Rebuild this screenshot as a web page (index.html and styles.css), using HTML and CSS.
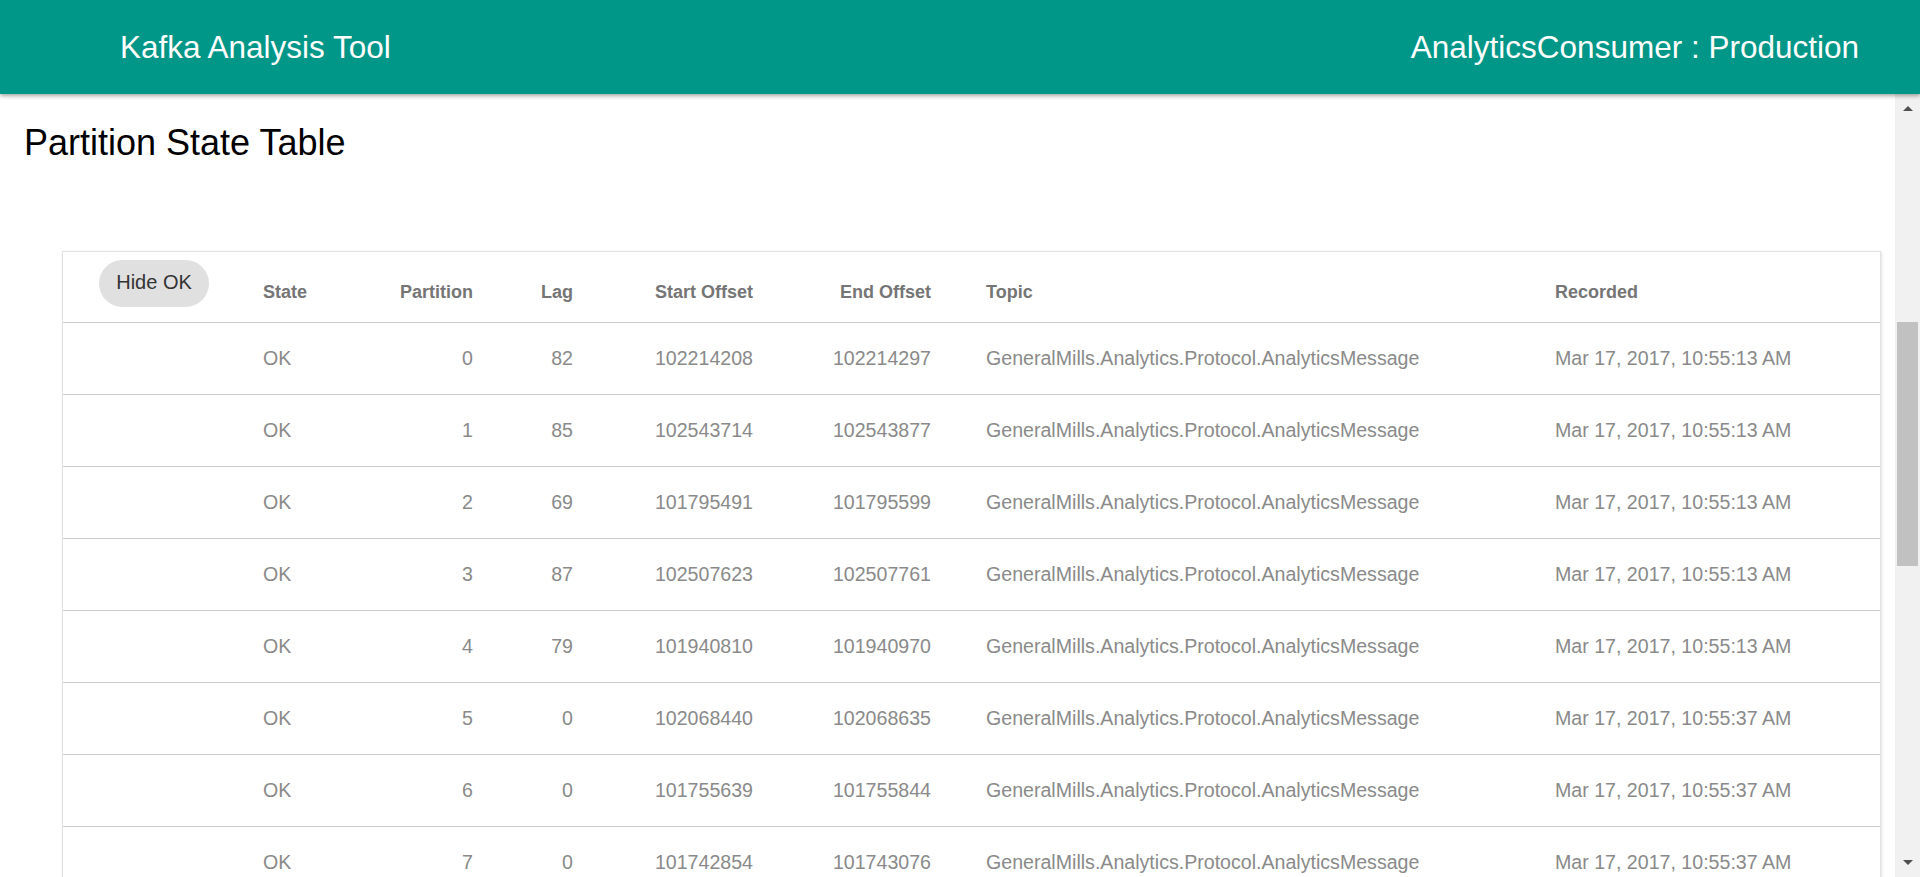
FILE: index.html
```html
<!DOCTYPE html>
<html>
<head>
<meta charset="utf-8">
<title>Kafka Analysis Tool</title>
<link rel="stylesheet" href="styles.css">
</head>
<body>
<header class="topbar">
  <div class="app-title">Kafka Analysis Tool</div>
  <div class="consumer">AnalyticsConsumer : Production</div>
</header>
<div class="main">
  <div class="content">
    <h1 class="page-title">Partition State Table</h1>
    <div class="card">
      <table class="grid">
        <colgroup>
          <col class="c-btn"><col class="c-state"><col class="c-part"><col class="c-lag"><col class="c-start"><col class="c-end"><col class="c-topic"><col class="c-rec">
        </colgroup>
        <thead>
          <tr>
            <th class="btn-cell"><button class="hide-btn">Hide OK</button></th>
            <th class="l">State</th>
            <th class="r">Partition</th>
            <th class="r">Lag</th>
            <th class="r">Start Offset</th>
            <th class="r">End Offset</th>
            <th class="l topic">Topic</th>
            <th class="l">Recorded</th>
          </tr>
        </thead>
        <tbody>
          <tr><td></td><td class="l">OK</td><td class="r">0</td><td class="r">82</td><td class="r">102214208</td><td class="r">102214297</td><td class="l topic">GeneralMills.Analytics.Protocol.AnalyticsMessage</td><td class="l">Mar 17, 2017, 10:55:13 AM</td></tr>
          <tr><td></td><td class="l">OK</td><td class="r">1</td><td class="r">85</td><td class="r">102543714</td><td class="r">102543877</td><td class="l topic">GeneralMills.Analytics.Protocol.AnalyticsMessage</td><td class="l">Mar 17, 2017, 10:55:13 AM</td></tr>
          <tr><td></td><td class="l">OK</td><td class="r">2</td><td class="r">69</td><td class="r">101795491</td><td class="r">101795599</td><td class="l topic">GeneralMills.Analytics.Protocol.AnalyticsMessage</td><td class="l">Mar 17, 2017, 10:55:13 AM</td></tr>
          <tr><td></td><td class="l">OK</td><td class="r">3</td><td class="r">87</td><td class="r">102507623</td><td class="r">102507761</td><td class="l topic">GeneralMills.Analytics.Protocol.AnalyticsMessage</td><td class="l">Mar 17, 2017, 10:55:13 AM</td></tr>
          <tr><td></td><td class="l">OK</td><td class="r">4</td><td class="r">79</td><td class="r">101940810</td><td class="r">101940970</td><td class="l topic">GeneralMills.Analytics.Protocol.AnalyticsMessage</td><td class="l">Mar 17, 2017, 10:55:13 AM</td></tr>
          <tr><td></td><td class="l">OK</td><td class="r">5</td><td class="r">0</td><td class="r">102068440</td><td class="r">102068635</td><td class="l topic">GeneralMills.Analytics.Protocol.AnalyticsMessage</td><td class="l">Mar 17, 2017, 10:55:37 AM</td></tr>
          <tr><td></td><td class="l">OK</td><td class="r">6</td><td class="r">0</td><td class="r">101755639</td><td class="r">101755844</td><td class="l topic">GeneralMills.Analytics.Protocol.AnalyticsMessage</td><td class="l">Mar 17, 2017, 10:55:37 AM</td></tr>
          <tr><td></td><td class="l">OK</td><td class="r">7</td><td class="r">0</td><td class="r">101742854</td><td class="r">101743076</td><td class="l topic">GeneralMills.Analytics.Protocol.AnalyticsMessage</td><td class="l">Mar 17, 2017, 10:55:37 AM</td></tr>
        </tbody>
      </table>
    </div>
  </div>
  <div class="scrollbar">
    <div class="arrow up"></div>
    <div class="track"><div class="thumb"></div></div>
    <div class="arrow down"></div>
  </div>
</div>
</body>
</html>
```
FILE: styles.css
```css
html, body {
  margin: 0;
  padding: 0;
  height: 877px;
  overflow: hidden;
  background: #ffffff;
  font-family: "Liberation Sans", Arial, sans-serif;
}

.topbar {
  position: relative;
  z-index: 2;
  height: 94px;
  background: #009688;
  color: #ffffff;
  display: flex;
  align-items: center;
  justify-content: space-between;
  padding: 0 61px 0 120px;
  box-shadow: 0 2px 4px rgba(0, 0, 0, 0.35);
  font-size: 31.5px;
}

.main {
  display: flex;
  height: 783px;
}

.content {
  flex: 1;
  overflow: hidden;
}

.page-title {
  margin: 29px 0 0 24px;
  font-size: 36px;
  line-height: 40px;
  font-weight: normal;
  color: #000000;
}

.card {
  margin: 88px 14px 0 62px;
  border: 1px solid #e2e2e2;
  box-shadow: 1px 1px 3px rgba(0, 0, 0, 0.12);
  background: #ffffff;
}

.grid {
  width: 100%;
  border-collapse: collapse;
  table-layout: fixed;
}

.c-btn { width: 200px; }
.c-state { width: 130px; }
.c-part { width: 80px; }
.c-lag { width: 100px; }
.c-start { width: 180px; }
.c-end { width: 178px; }
.c-topic { width: 624px; }

.grid th {
  height: 70px;
  padding: 30px 0 0 0;
  box-sizing: border-box;
  vertical-align: top;
  font-size: 18px;
  line-height: 21px;
  font-weight: bold;
  color: #757575;
  border-bottom: 1px solid #cccccc;
  white-space: nowrap;
}

.grid th.btn-cell {
  padding: 8px 0 0 36px;
  text-align: left;
}

.hide-btn {
  width: 110px;
  height: 47px;
  border: none;
  border-radius: 24px;
  background: #e0e0e0;
  color: #333333;
  font-family: "Liberation Sans", Arial, sans-serif;
  font-size: 20px;
  padding: 0 0 2px 0;
  margin: 0;
}

.grid td {
  height: 71px;
  padding: 0;
  vertical-align: middle;
  font-size: 19.6px;
  color: #8a8a8a;
  border-bottom: 1px solid #cccccc;
  white-space: nowrap;
}

.l { text-align: left; }
.r { text-align: right; }
.grid .topic { padding-left: 55px; }

.scrollbar {
  width: 25px;
  background: #f1f1f1;
  display: flex;
  flex-direction: column;
}

.arrow {
  height: 24px;
  display: flex;
  justify-content: center;
  align-items: center;
}

.arrow.up::before {
  content: "";
  border-left: 5px solid transparent;
  border-right: 5px solid transparent;
  border-bottom: 5px solid #505050;
  margin-top: 4px;
}

.arrow.down::before {
  content: "";
  border-left: 5px solid transparent;
  border-right: 5px solid transparent;
  border-top: 5px solid #505050;
  margin-bottom: 6px;
}

.track {
  flex: 1;
}

.thumb {
  margin: 204px 2px 0 2px;
  height: 244px;
  background: #c1c1c1;
}
```
